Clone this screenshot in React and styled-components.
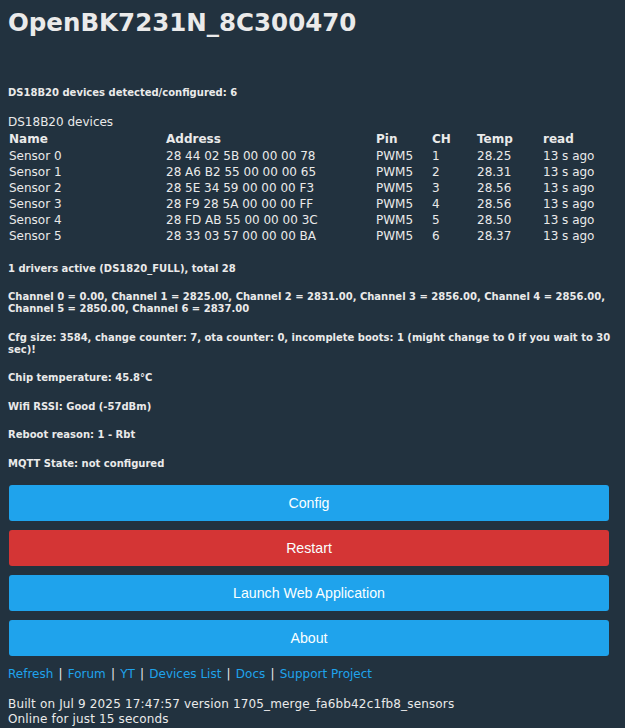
import styled, { createGlobalStyle } from 'styled-components';

const GlobalStyle = createGlobalStyle`
  html, body {
    margin: 0;
    padding: 0;
    background: #22323f;
  }
  body {
    padding: 8px 0 0 8px;
    color: #eaeaea;
    font-family: "DejaVu Sans", Verdana, sans-serif;
  }
`;

const sensors = [
  { name: 'Sensor 0', addr: '28 44 02 5B 00 00 00 78', pin: 'PWM5', ch: 1, temp: '28.25', read: '13 s ago' },
  { name: 'Sensor 1', addr: '28 A6 B2 55 00 00 00 65', pin: 'PWM5', ch: 2, temp: '28.31', read: '13 s ago' },
  { name: 'Sensor 2', addr: '28 5E 34 59 00 00 00 F3', pin: 'PWM5', ch: 3, temp: '28.56', read: '13 s ago' },
  { name: 'Sensor 3', addr: '28 F9 28 5A 00 00 00 FF', pin: 'PWM5', ch: 4, temp: '28.56', read: '13 s ago' },
  { name: 'Sensor 4', addr: '28 FD AB 55 00 00 00 3C', pin: 'PWM5', ch: 5, temp: '28.50', read: '13 s ago' },
  { name: 'Sensor 5', addr: '28 33 03 57 00 00 00 BA', pin: 'PWM5', ch: 6, temp: '28.37', read: '13 s ago' }
];

const infoLines = [
  '1 drivers active (DS1820_FULL), total 28',
  'Channel 0 = 0.00, Channel 1 = 2825.00, Channel 2 = 2831.00, Channel 3 = 2856.00, Channel 4 = 2856.00, Channel 5 = 2850.00, Channel 6 = 2837.00',
  'Cfg size: 3584, change counter: 7, ota counter: 0, incomplete boots: 1 (might change to 0 if you wait to 30 sec)!',
  'Chip temperature: 45.8°C',
  'Wifi RSSI: Good (-57dBm)',
  'Reboot reason: 1 - Rbt',
  'MQTT State: not configured'
];

const buttons = [
  { label: 'Config', color: '#1fa3ec' },
  { label: 'Restart', color: '#d43535' },
  { label: 'Launch Web Application', color: '#1fa3ec' },
  { label: 'About', color: '#1fa3ec' }
];

const links = ['Refresh', 'Forum', 'YT', 'Devices List', 'Docs', 'Support Project'];

function App() {
  return (
    <>
      <GlobalStyle />
      <Page>
        <Title>OpenBK7231N_8C300470</Title>
        <Detected>DS18B20 devices detected/configured: 6</Detected>
        <Caption>DS18B20 devices</Caption>
        <Table>
          <HeadRow>
            <span>Name</span>
            <span>Address</span>
            <span>Pin</span>
            <span>CH</span>
            <span>Temp</span>
            <span>read</span>
          </HeadRow>
          {sensors.map((s) => (
            <Row key={s.name}>
              <span>{s.name}</span>
              <span>{s.addr}</span>
              <span>{s.pin}</span>
              <span>{s.ch}</span>
              <span>{s.temp}</span>
              <span>{s.read}</span>
            </Row>
          ))}
        </Table>
        <InfoList>
          {infoLines.map((line) => (
            <Info key={line}>{line}</Info>
          ))}
        </InfoList>
        <Buttons>
          {buttons.map((b) => (
            <Button key={b.label} $bg={b.color}>
              {b.label}
            </Button>
          ))}
        </Buttons>
        <Links>
          {links.map((l, i) => (
            <span key={l}>
              {i > 0 && <Sep>|</Sep>}
              <LinkItem href='#'>{l}</LinkItem>
            </span>
          ))}
        </Links>
        <Footer>
          Built on Jul 9 2025 17:47:57 version 1705_merge_fa6bb42c1fb8_sensors
          <br />
          Online for just 15 seconds
        </Footer>
      </Page>
    </>
  );
}

const Page = styled.div`
  width: 602px;
  display: flex;
  flex-direction: column;
`;

const Title = styled.h1`
  margin: 0;
  font-size: 24.5px;
  line-height: 30px;
  font-weight: bold;
  white-space: nowrap;
`;

const Detected = styled.div`
  margin-top: 48.5px;
  font-size: 10px;
  line-height: 12px;
  font-weight: bold;
`;

const Caption = styled.div`
  margin-top: 15.5px;
  font-size: 12px;
  line-height: 16px;
`;

const Table = styled.div`
  display: flex;
  flex-direction: column;
  margin-top: 0.5px;
  font-size: 12px;
  line-height: 16px;
  padding-left: 1px;
`;

const Row = styled.div`
  display: grid;
  grid-template-columns: 157px 210px 56px 45px 66px auto;
  white-space: nowrap;
`;

const HeadRow = styled(Row)`
  font-weight: bold;
  height: 17px;
`;

const InfoList = styled.div`
  display: flex;
  flex-direction: column;
  gap: 16.6px;
  margin-top: 19px;
  width: 608px;
`;

const Info = styled.div`
  font-size: 10px;
  line-height: 12px;
  font-weight: bold;
`;

const Buttons = styled.div`
  display: flex;
  flex-direction: column;
  gap: 9px;
  margin: 14.5px 1px 0 1px;
`;

const Button = styled.button`
  height: 36px;
  border: 0;
  border-radius: 3px;
  background: ${(p) => p.$bg};
  color: #faffff;
  font-family: "Liberation Sans", Arial, sans-serif;
  font-size: 14.2px;
  cursor: pointer;
`;

const Links = styled.div`
  margin-top: 10px;
  font-size: 12px;
  line-height: 16px;
`;

const Sep = styled.span`
  margin: 0 5.2px;
`;

const LinkItem = styled.a`
  color: #1fa3ec;
  text-decoration: none;
`;

const Footer = styled.div`
  margin-top: 15px;
  font-size: 12px;
  line-height: 15px;
  letter-spacing: 0.15px;
`;

export default App;
